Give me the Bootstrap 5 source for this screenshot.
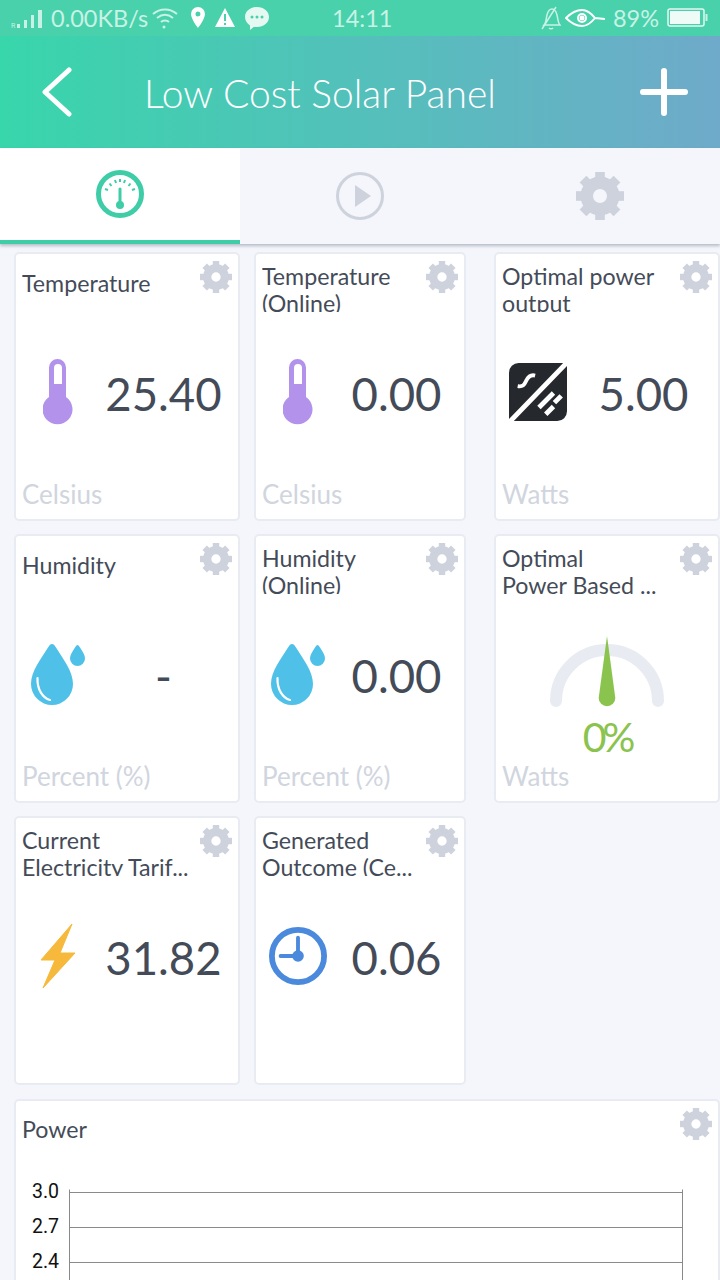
<!DOCTYPE html>
<html lang="en">
<head>
  <meta charset="UTF-8">
  <meta name="viewport" content="width=device-width, initial-scale=1.0">
  <title>Low Cost Solar Panel</title>
  <link href="https://cdn.jsdelivr.net/npm/bootstrap@5.3.2/dist/css/bootstrap.min.css" rel="stylesheet">
  <script src="https://cdn.jsdelivr.net/npm/bootstrap@5.3.2/dist/js/bootstrap.bundle.min.js" defer></script>
  <style>
    html, body { height: 1280px; overflow: hidden; }
    body { background: #f4f6fb; font-family: "Lato", "Noto Sans", sans-serif; color: #444b58; }
    .page-wrap { height: 1280px; overflow: hidden; }
    .status-bar { height: 36px; background: #48d1ab; color: #c9f2e6; font-size: 23.5px; line-height: 36px; padding-left: 8px; padding-right: 11px; }
    .status-left { width: 324px; gap: 4px; }
    .app-header { height: 112px; background: linear-gradient(90deg, #38d6ab, #6faaca); color: #fff; padding-left: 42px; padding-right: 32px; }
    .app-title { font-size: 39px; font-weight: 300; margin: 0 0 0 72px; padding-top: 3px; flex-grow: 1; }
    .tab-bar { height: 96px; box-shadow: 0 2px 3px rgba(70, 80, 100, .35); position: relative; }
    .tab-cell { width: 240px; height: 96px; }
    .tab-on { background: #fff; border-bottom: 4px solid #3fcda8; }
    .tab-gear { color: #ced2dc; }
    .dash-grid { display: grid; grid-template-columns: 226px 212px 240px; column-gap: 14px; row-gap: 13px; padding: 8px 0 0 14px; }
    .tile { position: relative; height: 269px; background: #fff; border: 2px solid #e8ebf1; border-radius: 5px; padding: 8px 6px 0; display: flex; flex-direction: column; }
    .tile-end { width: 226px; justify-self: end; }
    .tile-gear { position: absolute; right: 6px; top: 7px; width: 32px; height: 32px; color: #ced2dc; }
    .tile-title { font-size: 23.2px; line-height: 27px; height: 50px; padding-top: 1px; overflow: hidden; margin: 0; padding-right: 30px; }
    .tile-title.single { padding-top: 8px; }
    .tile-main { height: 120px; margin-top: 20px; }
    .tile-icon { width: 65px; padding-left: 7px; flex-shrink: 0; }
    .tile-value { flex-grow: 1; margin-right: -8px; padding-top: 4px; text-align: center; font-size: 45.5px; line-height: 1; }
    .tile-unit { font-size: 26px; line-height: 30px; color: #d0d5de; margin-top: 27px; }
    .gauge-main { height: 147px; }
    .gauge-main + .tile-unit { margin-top: 0; }
    .gauge-dial { margin-top: 22px; flex-shrink: 0; }
    .gauge-pct { color: #8bc34f; font-size: 41px; letter-spacing: -4px; line-height: 40px; text-align: center; margin-top: 7px; }
    .chart-tile { margin: 14px 0 0 14px; height: 300px; }
    .chart-tile .tile-title { height: auto; padding-top: 7px; }
    .chart-svg { display: block; margin: 45px 0 0 -22px; overflow: visible; }
    .chart-svg text { font-family: "Roboto", sans-serif; font-size: 19.5px; fill: #111; }
  </style>
</head>
<body>
  <svg width="0" height="0" class="position-absolute">
    <symbol id="gear" viewBox="0 0 24 24">
      <circle cx="12" cy="12" r="6.6" fill="none" stroke="currentColor" stroke-width="6.2"/>
      <g fill="currentColor">
        <rect x="9.6" y="0" width="4.8" height="5"/>
        <rect x="9.6" y="0" width="4.8" height="5" transform="rotate(45 12 12)"/>
        <rect x="9.6" y="0" width="4.8" height="5" transform="rotate(90 12 12)"/>
        <rect x="9.6" y="0" width="4.8" height="5" transform="rotate(135 12 12)"/>
        <rect x="9.6" y="0" width="4.8" height="5" transform="rotate(180 12 12)"/>
        <rect x="9.6" y="0" width="4.8" height="5" transform="rotate(225 12 12)"/>
        <rect x="9.6" y="0" width="4.8" height="5" transform="rotate(270 12 12)"/>
        <rect x="9.6" y="0" width="4.8" height="5" transform="rotate(315 12 12)"/>
      </g>
    </symbol>
    <symbol id="thermo" viewBox="0 0 31 66">
      <path fill="#b292eb" fill-rule="evenodd" d="M6 8.500a8.500 8.500 0 0 1 17 0V38a15 15 0 1 1-17 0ZM11 9v16h8V9a4 4 0 0 0-8 0Z"/>
    </symbol>
    <symbol id="drops" viewBox="0 0 54 61">
      <path fill="#4fc1e9" d="M21 0c1.500 0 2.500 1 4 3.500C32 15 42 27 42 40a21 21 0 0 1-42 0C0 27 10 15 17 3.500 18.500 1 19.500 0 21 0Z"/>
      <path fill="none" stroke="#fff" stroke-width="2.200" stroke-linecap="round" d="M6.500 34c-.5 11 5 20 12.500 22"/>
      <path fill="#4fc1e9" d="M46.500 1c1 0 1.500 1 2.500 2.500C52 8 54 11 54 14.500a7.500 7.500 0 0 1-15 0C39 11 41 8 44 3.500 45 2 45.500 1 46.500 1Z"/>
    </symbol>
    <symbol id="panel" viewBox="0 0 60 60">
      <path fill="#25292e" d="M10 0H56L0 58V10A10 10 0 0 1 10 0ZM60 3V50A10 10 0 0 1 50 60H5Z"/>
      <path fill="none" stroke="#fff" stroke-width="4" d="M9 24c6 1 7-2 9-6 2-4 5-6 9-5"/>
      <path fill="none" stroke="#fff" stroke-width="5" d="M31 46 46 31M38 53l8-8M47 41l7-7"/>
    </symbol>
  </svg>

  <div class="page-wrap">
    <div class="status-bar d-flex align-items-center">
      <div class="status-left d-flex align-items-center">
        <svg width="39" height="26" viewBox="0 0 39 26" fill="#c9f2e6"><text x="3" y="23" font-size="7" font-family="Roboto, sans-serif" fill="#c9f2e6">R</text><rect x="9" y="19" width="3" height="4"/><rect x="16" y="15" width="3" height="8"/><rect x="23" y="10" width="3" height="13"/><rect x="30" y="5" width="4" height="18"/></svg>
        <span>0.00KB/s</span>
        <svg width="26" height="26" viewBox="0 0 26 26" fill="none" stroke="#c9f2e6" stroke-width="2"><path d="M1 9c7-6 17-6 24 0M5 13c5-4 11-4 16 0M9 17c2-2 6-2 8 0"/><circle cx="12" cy="22" r="1.500" fill="#c9f2e6" stroke="none"/></svg>
        <svg class="ms-2" width="16" height="26" viewBox="0 0 16 26"><path fill="#fff" fill-rule="evenodd" d="M8 2a7 7 0 0 1 7 7c0 5-7 14-7 14S1 14 1 9a7 7 0 0 1 7-7Zm0 4.500a2.500 2.500 0 1 0 0 5 2.500 2.500 0 0 0 0-5Z"/></svg>
        <svg class="ms-1" width="22" height="26" viewBox="0 0 22 26"><path fill="#fff" fill-rule="evenodd" d="M11 3l10 19H1ZM10 9v7h2V9Zm0 9v2h2v-2Z"/></svg>
        <svg class="ms-1" width="26" height="26" viewBox="0 0 26 26"><path fill="#e6f8f2" d="M13 2c7 0 12 4.500 12 10s-5 10-12 10c-1 0-2 0-3-.3L6 25v-4.500C3 18.500 1 15.500 1 12 1 6.500 6 2 13 2Z"/><circle cx="8" cy="12" r="1.500" fill="#48d1ab"/><circle cx="13" cy="12" r="1.500" fill="#48d1ab"/><circle cx="18" cy="12" r="1.500" fill="#48d1ab"/></svg>
      </div>
      <span>14:11</span>
      <div class="ms-auto d-flex align-items-center">
        <svg width="20" height="26" viewBox="0 0 20 26" fill="none" stroke="#c9f2e6" stroke-width="1.500"><path d="M3 20c2-2 2-6 3-10s3-6 5-6 4 2 5 6 1 8 3 10ZM1 24 15 2M8 23c1 1 3 1 4 0"/></svg>
        <svg class="ms-1" width="40" height="26" viewBox="0 0 40 26" fill="none" stroke="#fff" stroke-width="2"><path d="M1 13c6-6 11-8 16-8s9 3 13 8c-4 5-8 8-13 8S7 19 1 13ZM30 13l10 1"/><circle cx="17" cy="13" r="4"/><circle cx="17" cy="13" r="1.500" fill="#fff"/></svg>
        <span class="ms-2">89%</span>
        <svg class="ms-2" width="42" height="20" viewBox="0 0 42 20"><rect x="1" y="1" width="36" height="17" rx="2" fill="none" stroke="#e6f8f2" stroke-width="1.500"/><rect x="3" y="3" width="30" height="13" fill="#eefbf7"/><rect x="38.500" y="6" width="2" height="7" fill="#c9f2e6"/></svg>
      </div>
    </div>

    <header class="app-header d-flex align-items-center">
      <svg width="30" height="50" viewBox="0 0 30 50" fill="none" stroke="#fff" stroke-width="5" stroke-linecap="round" stroke-linejoin="round"><path d="M27 3 3 25l24 22"/></svg>
      <h1 class="app-title">Low Cost Solar Panel</h1>
      <svg width="48" height="48" viewBox="0 0 48 48" fill="none" stroke="#fff" stroke-width="6" stroke-linecap="round"><path d="M24 3v42M3 24h42"/></svg>
    </header>

    <div class="tab-bar d-flex">
      <div class="tab-cell tab-on d-flex align-items-center justify-content-center">
        <svg width="48" height="48" viewBox="0 0 48 48" fill="none" stroke="#3fcda8"><circle cx="24" cy="24" r="21.500" stroke-width="5"/><path stroke-width="3" stroke-linecap="round" d="M24 19v15"/><circle cx="24" cy="35" r="4" fill="#3fcda8" stroke="none"/><path stroke-width="2" d="M9 19l3 1M13.500 13.500l2 2.500M19 10l1 3M24 9v3M29 10l-1 3M34.500 13.500l-2 2.500M39 19l-3 1"/></svg>
      </div>
      <div class="tab-cell d-flex align-items-center justify-content-center">
        <svg width="48" height="48" viewBox="0 0 48 48"><circle cx="24" cy="24" r="22.500" fill="none" stroke="#ced2dc" stroke-width="3"/><path fill="#ced2dc" d="M19 13l16 11-16 11Z"/></svg>
      </div>
      <div class="tab-cell d-flex align-items-center justify-content-center">
        <svg width="48" height="48" class="tab-gear"><use href="#gear"/></svg>
      </div>
    </div>

    <main class="dash-grid">
      <div class="tile">
        <svg class="tile-gear"><use href="#gear"/></svg>
        <p class="tile-title single">Temperature</p>
        <div class="tile-main d-flex align-items-center">
          <div class="tile-icon d-flex justify-content-center"><svg width="31" height="66"><use href="#thermo"/></svg></div>
          <div class="tile-value">25.40</div>
        </div>
        <div class="tile-unit">Celsius</div>
      </div>
      <div class="tile">
        <svg class="tile-gear"><use href="#gear"/></svg>
        <p class="tile-title">Temperature (Online)</p>
        <div class="tile-main d-flex align-items-center">
          <div class="tile-icon d-flex justify-content-center"><svg width="31" height="66"><use href="#thermo"/></svg></div>
          <div class="tile-value">0.00</div>
        </div>
        <div class="tile-unit">Celsius</div>
      </div>
      <div class="tile tile-end">
        <svg class="tile-gear"><use href="#gear"/></svg>
        <p class="tile-title">Optimal power output</p>
        <div class="tile-main d-flex align-items-center">
          <div class="tile-icon d-flex justify-content-center"><svg width="60" height="60"><use href="#panel"/></svg></div>
          <div class="tile-value">5.00</div>
        </div>
        <div class="tile-unit">Watts</div>
      </div>

      <div class="tile">
        <svg class="tile-gear"><use href="#gear"/></svg>
        <p class="tile-title single">Humidity</p>
        <div class="tile-main d-flex align-items-center">
          <div class="tile-icon d-flex justify-content-center"><svg width="54" height="61"><use href="#drops"/></svg></div>
          <div class="tile-value">-</div>
        </div>
        <div class="tile-unit">Percent (%)</div>
      </div>
      <div class="tile">
        <svg class="tile-gear"><use href="#gear"/></svg>
        <p class="tile-title">Humidity (Online)</p>
        <div class="tile-main d-flex align-items-center">
          <div class="tile-icon d-flex justify-content-center"><svg width="54" height="61"><use href="#drops"/></svg></div>
          <div class="tile-value">0.00</div>
        </div>
        <div class="tile-unit">Percent (%)</div>
      </div>
      <div class="tile tile-end">
        <svg class="tile-gear"><use href="#gear"/></svg>
        <p class="tile-title">Optimal<br>Power Based ...</p>
        <div class="tile-main gauge-main d-flex flex-column align-items-center">
          <svg class="gauge-dial" width="116" height="74" viewBox="0 0 116 74"><path fill="none" stroke="#e8ebf1" stroke-width="12" stroke-linecap="round" d="M7 65a51 51 0 0 1 102 0"/><path fill="#8bc34f" d="M58 0l8.300 62a8.300 8.300 0 0 1-16.600 0Z"/></svg>
          <div class="gauge-pct">0%</div>
        </div>
        <div class="tile-unit">Watts</div>
      </div>

      <div class="tile">
        <svg class="tile-gear"><use href="#gear"/></svg>
        <p class="tile-title">Current<br>Electricity Tarif...</p>
        <div class="tile-main d-flex align-items-center">
          <div class="tile-icon d-flex justify-content-center"><svg width="36" height="66" viewBox="0 0 36 66"><path fill="#f6b93b" stroke="#f6b93b" stroke-linejoin="round" d="M32 1 1 37H15L3 65 35 30H20Z"/></svg></div>
          <div class="tile-value">31.82</div>
        </div>
      </div>
      <div class="tile">
        <svg class="tile-gear"><use href="#gear"/></svg>
        <p class="tile-title">Generated<br>Outcome (Ce...</p>
        <div class="tile-main d-flex align-items-center">
          <div class="tile-icon d-flex justify-content-center"><svg width="60" height="60" viewBox="0 0 60 60" fill="none" stroke="#4a89dc"><circle cx="30" cy="30" r="27" stroke-width="6"/><path stroke-width="4" stroke-linecap="round" d="M30 11v19H12"/><circle cx="30" cy="30" r="6" fill="#4a89dc" stroke="none"/></svg></div>
          <div class="tile-value">0.06</div>
        </div>
      </div>
    </main>

    <section class="tile chart-tile">
      <svg class="tile-gear"><use href="#gear"/></svg>
      <p class="tile-title">Power</p>
      <svg class="chart-svg" width="704" height="130" viewBox="0 0 704 130">
        <g stroke="#8a8a8a" stroke-width="1" fill="none">
          <path d="M69.500 1.500V130M682.500 1.500V130M69 4.500H682M69 39.500H682M69 74.500H682"/>
        </g>
        <text x="32" y="10">3.0</text>
        <text x="32" y="45">2.7</text>
        <text x="32" y="80">2.4</text>
      </svg>
    </section>
  </div>
</body>
</html>
